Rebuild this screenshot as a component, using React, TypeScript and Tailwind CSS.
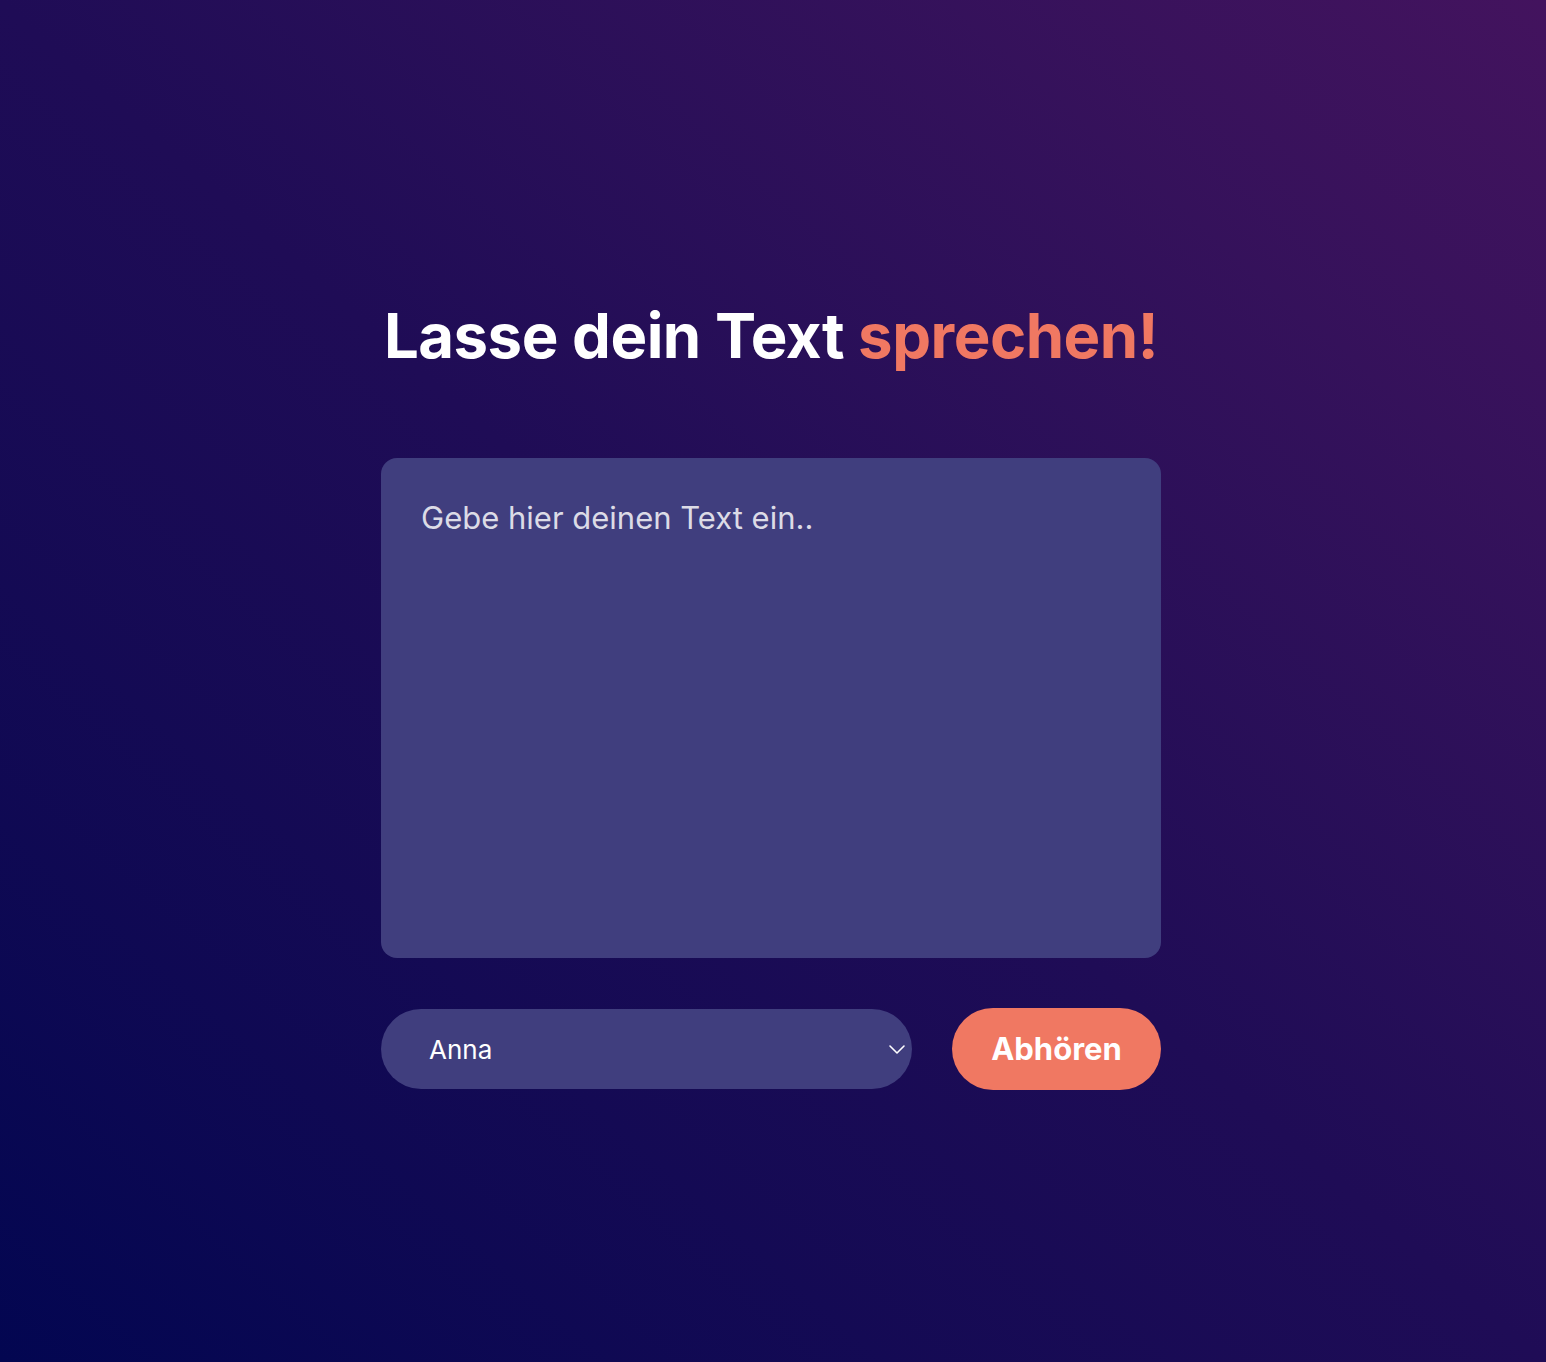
import React from 'react';

const font = { fontFamily: 'Inter, "Noto Sans", sans-serif' };

export default function App() {
  const [text, setText] = React.useState('');
  const [voice, setVoice] = React.useState('Anna');

  return (
    <div
      className="min-h-screen w-full bg-gradient-to-tr from-[#030651] via-[#1f0c56] to-[#43135e] flex flex-col items-center pt-[298px] pr-1"
      style={font}
    >
      <div className="w-[780px] flex flex-col">
        <h1 className="text-center text-[61.7px] font-bold leading-[76px] tracking-[-0.5px] text-white">
          Lasse dein Text <span className="text-[#f07862]">sprechen!</span>
        </h1>

        <textarea
          value={text}
          onChange={(e) => setText(e.target.value)}
          placeholder="Gebe hier deinen Text ein.."
          className="mt-[84px] h-[500px] w-full resize-none rounded-2xl bg-[#403e7e] px-10 pt-[40px] pb-10 text-[31px] leading-[40px] text-white placeholder:text-[#dcdbe6] outline-none"
        />

        <div className="mt-[50px] flex items-center gap-10">
          <div className="relative flex-1">
            <select
              value={voice}
              onChange={(e) => setVoice(e.target.value)}
              className="h-20 w-full appearance-none rounded-full bg-[#403e7e] pl-12 pr-12 text-[26px] text-white outline-none"
            >
              <option>Anna</option>
              <option>Markus</option>
              <option>Petra</option>
            </select>
            <svg
              className="pointer-events-none absolute right-[6px] top-1/2 -translate-y-1/2"
              width="18"
              height="12"
              viewBox="0 0 18 12"
              fill="none"
            >
              <path d="M2 3l7 7 7-7" stroke="white" strokeWidth="1.6" strokeLinecap="round" strokeLinejoin="round" />
            </svg>
          </div>
          <button className="h-[82px] w-[209px] rounded-full bg-[#f07862] text-[31px] font-bold text-white">
            Abhören
          </button>
        </div>
      </div>
    </div>
  );
}
